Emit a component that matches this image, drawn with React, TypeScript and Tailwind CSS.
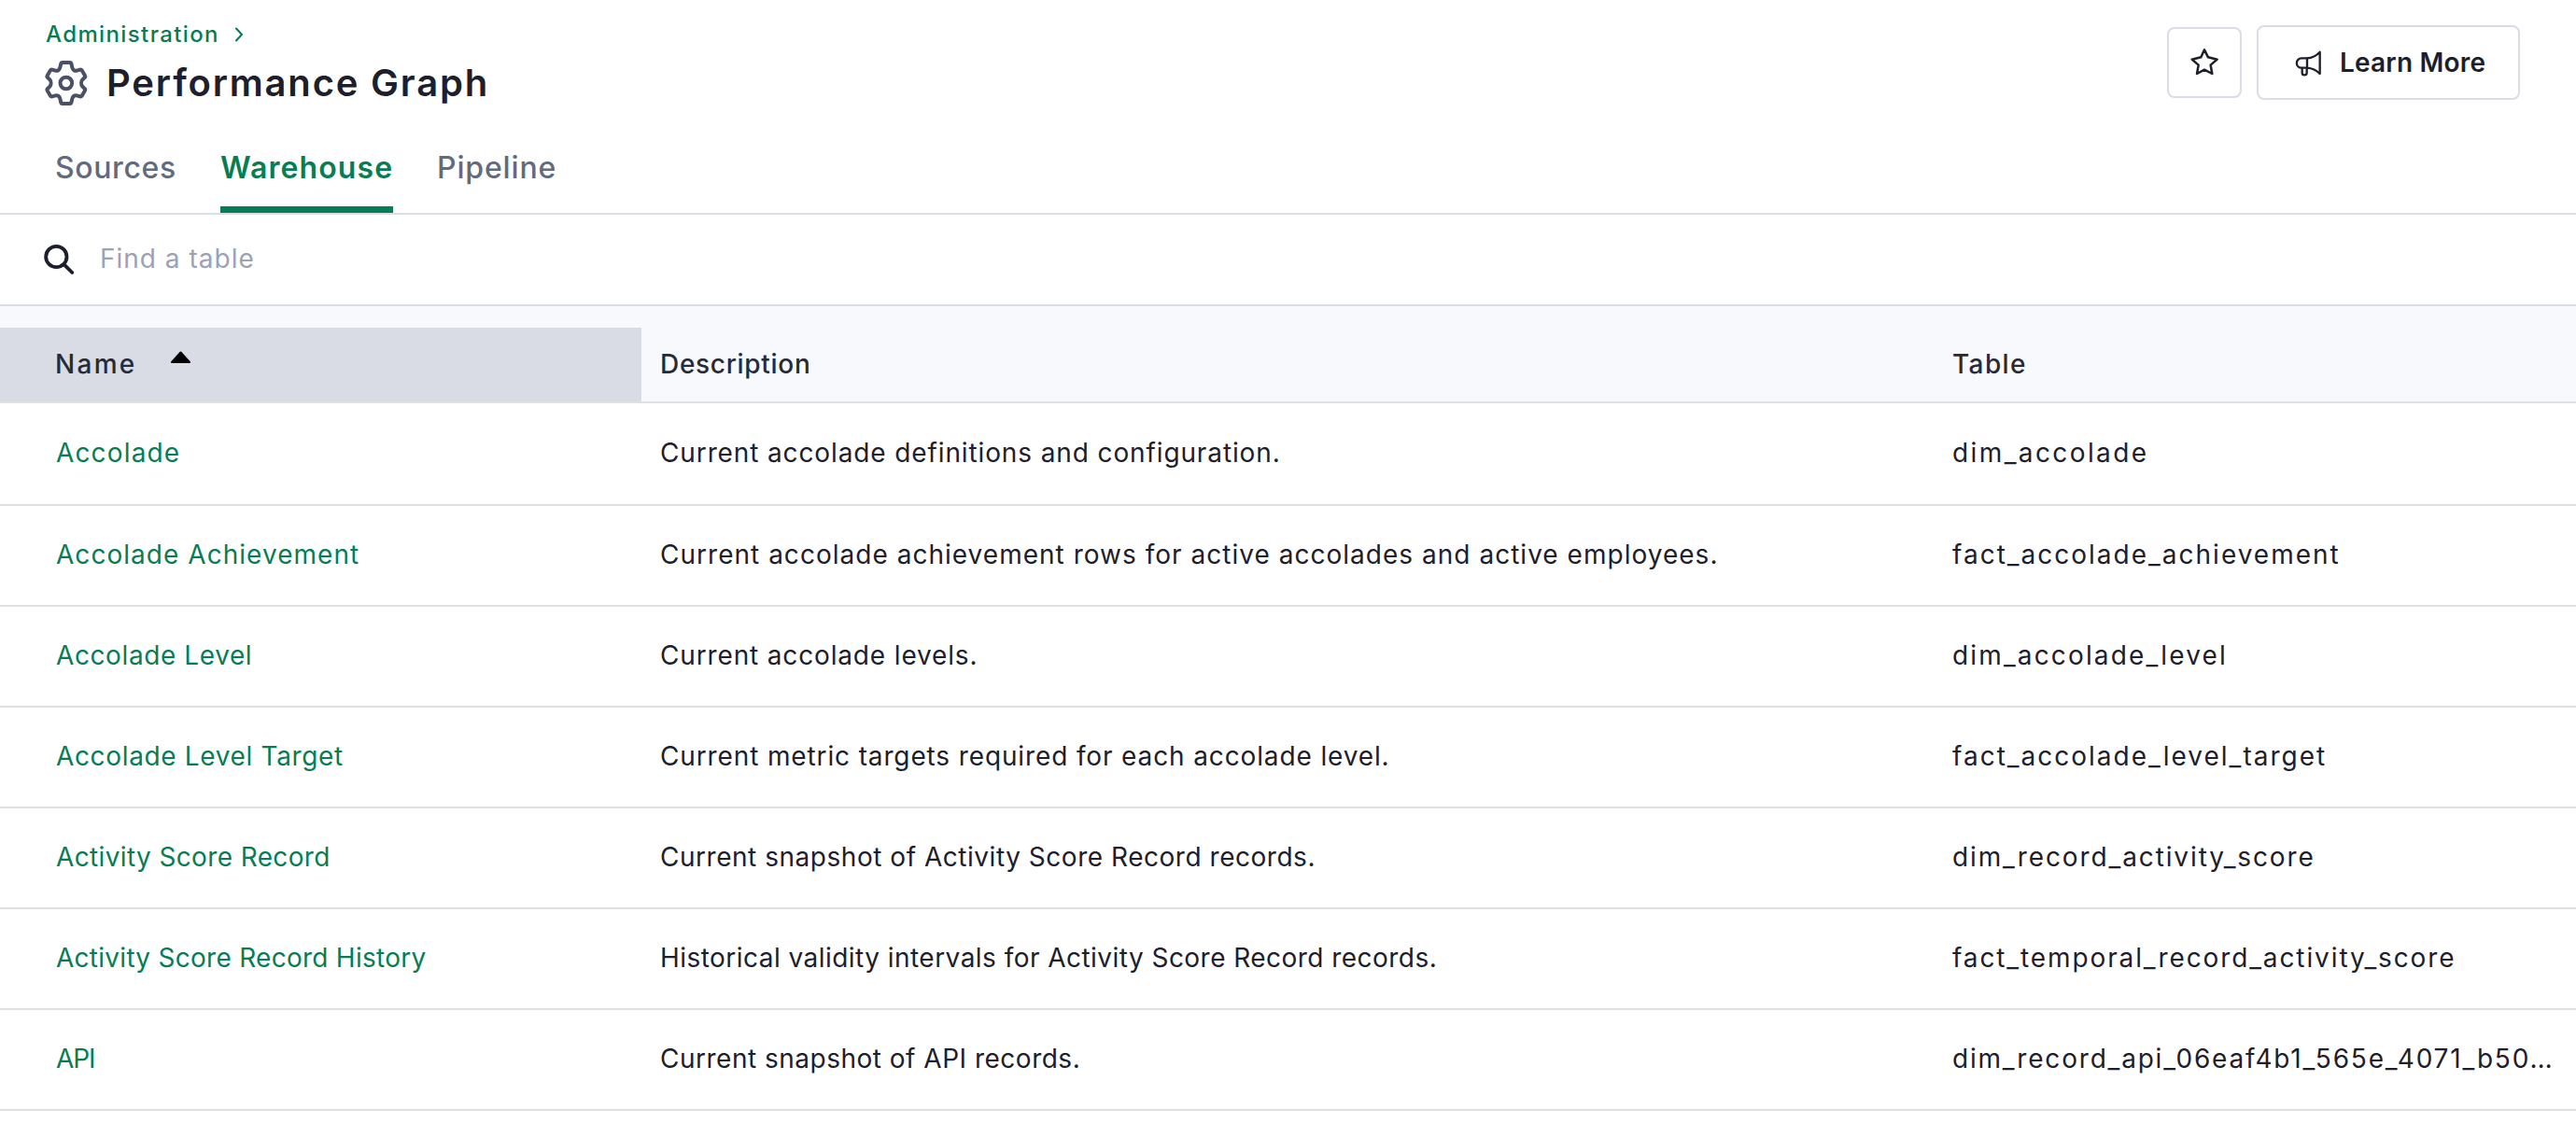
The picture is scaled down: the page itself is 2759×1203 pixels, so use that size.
import { useState } from 'react';
import clsx from 'clsx';

type Row = {
  name: string;
  nameClass: string;
  description: string;
  descriptionClass: string;
  table: string;
  tableClass: string;
};

const tabs = [
  { id: 'sources', label: 'Sources', className: 'w-[130px] tracking-[0.62px]' },
  { id: 'warehouse', label: 'Warehouse', className: 'w-[185px] pr-px tracking-[1.1px]' },
  { id: 'pipeline', label: 'Pipeline', className: 'w-[127px] tracking-[0.85px]' },
];

const rows: Row[] = [
  {
    name: 'Accolade',
    nameClass: 'tracking-[1.15px]',
    description: 'Current accolade definitions and configuration.',
    descriptionClass: 'tracking-[0.88px]',
    table: 'dim_accolade',
    tableClass: 'tracking-[2.4px]',
  },
  {
    name: 'Accolade Achievement',
    nameClass: 'tracking-[1.04px]',
    description: 'Current accolade achievement rows for active accolades and active employees.',
    descriptionClass: 'tracking-[1.02px]',
    table: 'fact_accolade_achievement',
    tableClass: 'tracking-[2px]',
  },
  {
    name: 'Accolade Level',
    nameClass: 'tracking-[0.6px]',
    description: 'Current accolade levels.',
    descriptionClass: 'tracking-[0.85px]',
    table: 'dim_accolade_level',
    tableClass: 'tracking-[2.15px]',
  },
  {
    name: 'Accolade Level Target',
    nameClass: 'tracking-[0.65px]',
    description: 'Current metric targets required for each accolade level.',
    descriptionClass: 'tracking-[0.87px]',
    table: 'fact_accolade_level_target',
    tableClass: 'tracking-[2px]',
  },
  {
    name: 'Activity Score Record',
    nameClass: 'tracking-[0.37px]',
    description: 'Current snapshot of Activity Score Record records.',
    descriptionClass: 'tracking-[0.53px]',
    table: 'dim_record_activity_score',
    tableClass: 'tracking-[1.89px]',
  },
  {
    name: 'Activity Score Record History',
    nameClass: 'tracking-[0.27px]',
    description: 'Historical validity intervals for Activity Score Record records.',
    descriptionClass: 'tracking-[0.46px]',
    table: 'fact_temporal_record_activity_score',
    tableClass: 'tracking-[1.89px]',
  },
  {
    name: 'API',
    nameClass: 'tracking-[-1.1px]',
    description: 'Current snapshot of API records.',
    descriptionClass: 'tracking-[0.5px]',
    table: 'dim_record_api_06eaf4b1_565e_4071_b50…',
    tableClass: 'tracking-[1.8px]',
  },
];

function GearIcon() {
  return (
    <svg
      className="h-[52px] w-[50px] text-[#4a5066]"
      viewBox="48 40 150 156"
      fill="none"
      stroke="currentColor"
      strokeWidth="12"
      strokeLinejoin="round"
    >
      <path d="M110 52 H135 Q138 52 139 55 L142 68 C144 76 150 80 157 78 L167 75 Q171 74 173 77 L183 94 Q185 97 182 100 L175 107 C170 113 170 123 175 129 L182 136 Q185 139 183 142 L173 159 Q171 162 167 161 L157 158 C150 156 144 160 142 168 L139 181 Q138 184 135 184 H110 Q107 184 106 181 L103 168 C101 160 95 156 88 158 L78 161 Q74 162 72 159 L62 142 Q60 139 63 136 L70 129 C75 123 75 113 70 107 L63 100 Q60 97 62 94 L72 77 Q74 74 78 75 L88 78 C95 80 101 76 103 68 L106 55 Q107 52 110 52 Z" />
      <circle cx="122.5" cy="118" r="19" />
    </svg>
  );
}

function StarIcon() {
  return (
    <svg
      className="size-8"
      viewBox="45 33 96 96"
      fill="none"
      stroke="currentColor"
      strokeWidth="7.5"
      strokeLinejoin="round"
    >
      <path d="M93 40 L105 64 L134 71 L113 89 L118 117 L93 104 L69 117 L74 89 L53 71 L82 64 Z" />
    </svg>
  );
}

function MegaphoneIcon() {
  return (
    <svg
      className="size-[30px]"
      viewBox="51 36 90 90"
      fill="none"
      stroke="currentColor"
      strokeWidth="7"
      strokeLinejoin="round"
    >
      <path d="M93 67 H75 A15.5 15.5 0 0 0 75 98 H93 Z" />
      <path d="M93 67 C108 66 122 60 134 47 V117 C122 105 108 99 93 98" />
      <path d="M77 98 V113 Q77 121 84.500 121 Q92 121 92 113 V98" />
    </svg>
  );
}

function SearchIcon() {
  return (
    <svg
      className="size-[37px]"
      viewBox="45 43 111 111"
      fill="none"
      stroke="currentColor"
      strokeWidth="11.5"
      strokeLinecap="round"
    >
      <circle cx="91" cy="88" r="33.5" />
      <path d="M116 113 L142 139" />
    </svg>
  );
}

export default function App() {
  const [activeTab, setActiveTab] = useState('warehouse');
  const [query, setQuery] = useState('');

  const visibleRows = rows.filter((row) => row.name.toLowerCase().includes(query.toLowerCase()));

  return (
    <div className="h-[1203px] w-[2759px] overflow-hidden bg-white font-['Inter',sans-serif] text-[28px] text-[#1d202c]">
      {/* Header */}
      <header className="h-[230px] border-b-2 border-[#dadde8]">
        <div className="flex h-[115px] items-start justify-between pr-[60px] pl-[46px]">
          <div className="pt-[21px]">
            <nav className="flex h-8 items-center gap-4 pl-[3px] text-[#077d55]">
              <a href="#" className="text-2xl leading-8 font-medium tracking-[1.38px]">
                Administration
              </a>
              <svg className="h-4 w-2.5" viewBox="0 0 10 16" fill="none" stroke="currentColor" strokeWidth="2">
                <path d="M2 1.500 L8 8 L2 14.500" strokeLinecap="round" strokeLinejoin="round" />
              </svg>
            </nav>
            <div className="mt-2.5 flex h-[52px] items-center gap-[18px]">
              <GearIcon />
              <h1 className="text-[40px] leading-[48px] font-semibold tracking-[1.8px]">Performance Graph</h1>
            </div>
          </div>
          <div className="flex items-center gap-4 pt-[27px]">
            <button className="flex h-[76px] w-20 items-center justify-center rounded-lg border-2 border-[#dadde8]">
              <StarIcon />
            </button>
            <button className="flex h-20 w-[282px] items-center gap-[19px] rounded-lg border-2 border-[#dadde8] pl-[38px]">
              <MegaphoneIcon />
              <span className="font-semibold tracking-[0.2px] whitespace-nowrap">Learn More</span>
            </button>
          </div>
        </div>

        {/* Tabs */}
        <div className="flex h-[113px] gap-[47px] pl-[59px]">
          {tabs.map((tab) => (
            <button
              key={tab.id}
              onClick={() => setActiveTab(tab.id)}
              className={clsx(
                'border-b-[7px] pt-6 text-left text-[32px] leading-10 whitespace-nowrap',
                tab.className,
                activeTab === tab.id
                  ? 'border-[#077d55] font-semibold text-[#077d55]'
                  : 'border-transparent font-medium text-[#626a80]'
              )}
            >
              {tab.label}
            </button>
          ))}
        </div>
      </header>

      {/* Search */}
      <div className="flex h-[98px] items-center gap-[25px] border-b-2 border-[#dadde8] pl-[45px]">
        <SearchIcon />
        <input
          value={query}
          onChange={(e) => setQuery(e.target.value)}
          placeholder="Find a table"
          className="mb-[3px] w-[600px] tracking-[1px] outline-none placeholder:text-[#9ca1b5]"
        />
      </div>

      {/* Column headings */}
      <div className="grid h-[104px] grid-cols-[687px_1384px_1fr] border-b-2 border-[#e0e0e0] bg-[#f8f9fd] pt-[23px] font-medium text-[#272a37]">
        <div className="flex items-center bg-[#d9dce5] pb-0.5 pl-[59px]">
          <span className="w-[123px] tracking-[2.3px]">Name</span>
          <svg className="mb-[13px] h-[14px] w-[23px]" viewBox="0 0 23 14">
            <path
              d="M11.500 1.500 L21 12 H2 Z"
              className="fill-black stroke-black"
              strokeWidth="2"
              strokeLinejoin="round"
            />
          </svg>
        </div>
        <div className="flex items-center pb-0.5 pl-5 tracking-[0.7px]">Description</div>
        <div className="flex items-center pb-0.5 pl-5 tracking-[1.38px]">Table</div>
      </div>

      {/* Rows */}
      {visibleRows.map((row, i) => (
        <div
          key={row.name}
          className={clsx(
            'grid grid-cols-[687px_1384px_1fr] items-center border-b-2 border-[#e0e0e0] pb-0.5 whitespace-nowrap',
            i === 0 ? 'h-[110px]' : 'h-[108px]'
          )}
        >
          <a href="#" className={clsx('pl-[60px] text-[#077d55]', row.nameClass)}>
            {row.name}
          </a>
          <div className={clsx('pl-5', row.descriptionClass)}>{row.description}</div>
          <div className={clsx('pl-5', row.tableClass)}>{row.table}</div>
        </div>
      ))}
    </div>
  );
}
